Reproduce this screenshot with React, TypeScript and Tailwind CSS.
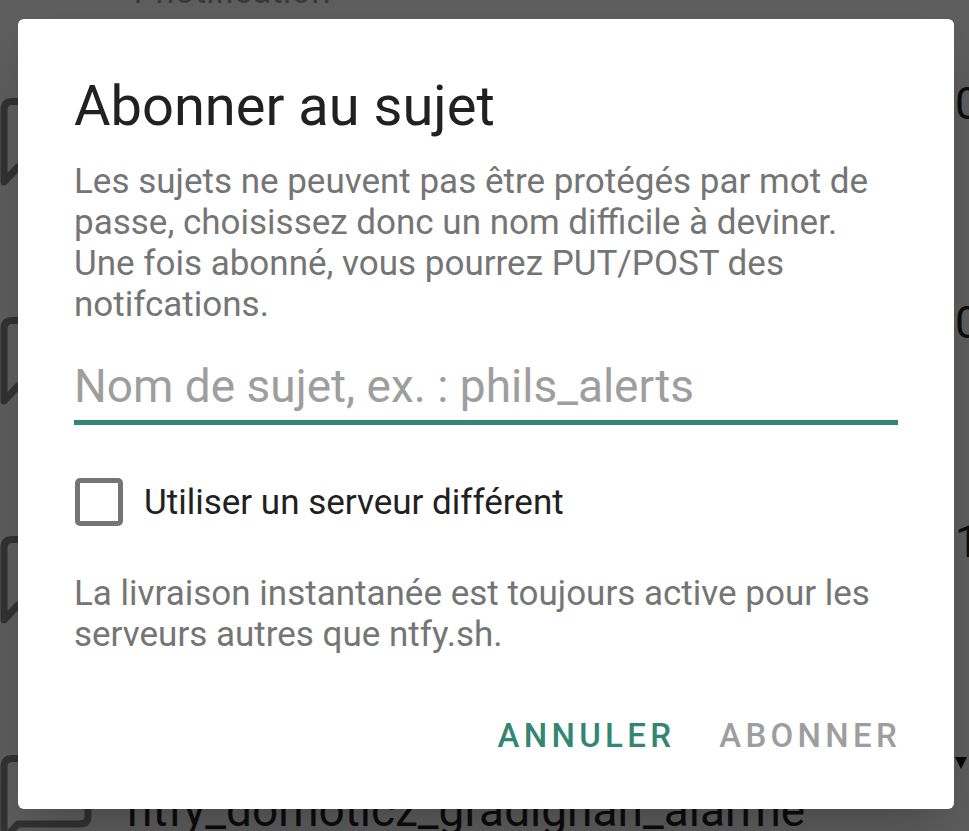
import React from "react";

type Row = { title: string; sub: string; time: string; tri?: boolean };

const rows: Row[] = [
  { title: "alertes_maison", sub: "1 notification", time: "" },
  { title: "backup_serveur_nas", sub: "3 notifications", time: "09:41" },
  { title: "ntfy_test_topic", sub: "2 notifications", time: "08:15" },
  { title: "mises_a_jour_systeme", sub: "5 notifications", time: "17:03" },
  { title: "ntfy_domoticz_gradignan_alarme", sub: "1 notification", time: "", tri: true },
];

function Bubble() {
  return (
    <svg width="100" height="90" viewBox="0 0 100 90" fill="none">
      <path
        d="M18 69 L80 69 Q88 69 88 61 L88 12 Q88 3.5 80 3.5 L12 3.5 Q4 3.5 4 12 L4 84 Z"
        stroke="#888888"
        strokeWidth="7"
        strokeLinejoin="round"
      />
    </svg>
  );
}

export default function App() {
  return (
    <div className="relative w-[969px] h-[831px] overflow-hidden bg-white font-[Roboto,sans-serif]">
      {/* underlying list */}
      <div className="flex flex-col mt-[-141px]">
        {rows.map((r, i) => (
          <div key={i} className="flex h-[219px] shrink-0">
            <div className="w-[127px] shrink-0 pt-[20px]">
              <Bubble />
            </div>
            <div className="w-[827px] shrink-0 pt-[48px] flex flex-col">
              <div className="text-[46px] leading-[54px] text-[#212121] whitespace-nowrap">{r.title}</div>
              <div className="mt-[10px] text-[35px] leading-[41px] text-[#9e9e9e] whitespace-nowrap">{r.sub}</div>
            </div>
            <div className="w-[140px] shrink-0 pl-[1px]">
              {r.time && (
                <div className="text-[44px] leading-[52px] text-[#222222] whitespace-nowrap">{r.time}</div>
              )}
              {r.tri && (
                <svg width="14" height="14" viewBox="0 0 14 14" className="mt-[20px]">
                  <polygon points="0,2 12,2 6,14" fill="#111111" />
                </svg>
              )}
            </div>
          </div>
        ))}
      </div>

      {/* scrim */}
      <div className="absolute inset-0 bg-black/[0.63]" />

      {/* dialog */}
      <div className="absolute left-[18px] top-[19px] w-[936px] h-[790px] rounded-[6px] bg-white shadow-2xl px-[56px] pt-[54px] flex flex-col">
        <h2 className="text-[56px] leading-[66px] text-[#212121] font-normal">Abonner au sujet</h2>
        <p className="mt-[22px] text-[35px] leading-[41px] text-[#757575]">
          Les sujets ne peuvent pas être protégés par mot de passe, choisissez donc un nom difficile à deviner. Une fois abonné, vous pourrez PUT/POST des notifcations.
        </p>
        <input
          type="text"
          placeholder="Nom de sujet, ex. : phils_alerts"
          className="mt-[34px] w-full h-[66px] pb-[7px] text-[46px] text-[#212121] placeholder:text-[#9e9e9e] border-b-[5px] border-[#338574] outline-none bg-transparent font-[Roboto,sans-serif]"
        />
        <div className="mt-[53px] flex items-center">
          <div className="ml-[1px] w-[48px] h-[48px] rounded-[5px] border-[5px] border-[#757575]" />
          <span className="ml-[21px] text-[35px] leading-[41px] text-[#212121]">Utiliser un serveur différent</span>
        </div>
        <p className="mt-[47px] text-[35px] leading-[41px] text-[#757575]">
          La livraison instantanée est toujours active pour les serveurs autres que ntfy.sh.
        </p>
        <div className="mt-[61px] flex justify-end items-center gap-[44px] mr-[-3px]">
          <span className="text-[33px] leading-[39px] font-medium tracking-[4.3px] text-[#338574]">ANNULER</span>
          <span className="text-[33px] leading-[39px] font-medium tracking-[4.3px] text-[#9e9e9e]">ABONNER</span>
        </div>
      </div>
    </div>
  );
}
